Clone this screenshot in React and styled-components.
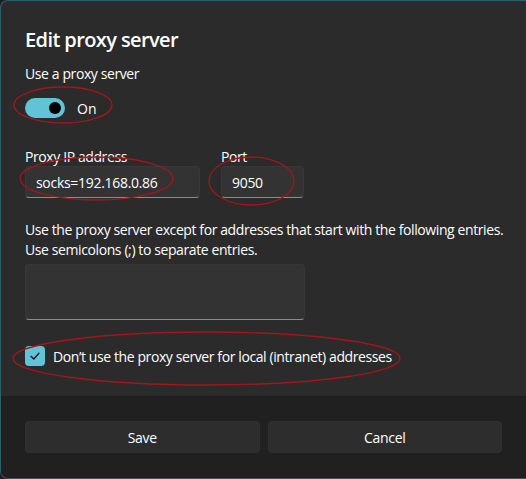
import React from 'react';
import styled, { createGlobalStyle } from 'styled-components';

const Global = createGlobalStyle`
  html, body {
    margin: 0;
    padding: 0;
    background: #1f1f1f;
  }
  * { box-sizing: border-box; }
`

const Dialog = styled.div`
  position: relative;
  width: 526px;
  height: 479px;
  display: flex;
  flex-direction: column;
  background: #2b2b2b;
  border: 1px solid #2d5d70;
  border-right: none;
  border-radius: 8px 0 0 8px;
  overflow: hidden;
  font-family: "Open Sans", "Noto Sans", sans-serif;
  color: #ffffff;
`

const Body = styled.div`
  flex: 1;
  padding: 25px 24px 0 24px;
  display: flex;
  flex-direction: column;
`

const Title = styled.h1`
  margin: 0;
  font-size: 20px;
  line-height: 28px;
  font-weight: 600;
  letter-spacing: -0.6px;
`

const Label = styled.div`
  font-size: 14px;
  line-height: ${({ lh }) => lh || 20}px;
  margin-top: ${({ mt }) => mt || 0}px;
  letter-spacing: -0.4px;
  white-space: nowrap;
`

const ToggleRow = styled.div`
  display: flex;
  align-items: center;
  gap: 12px;
  margin-top: 14px;
  height: 20px;
  font-size: 14px;
`

const Track = styled.div`
  width: 40px;
  height: 20px;
  border-radius: 10px;
  background: #62c3d6;
  display: flex;
  align-items: center;
  justify-content: flex-end;
  padding-right: 4px;
`

const Knob = styled.div`
  width: 12px;
  height: 12px;
  border-radius: 50%;
  background: #000;
`

const Fields = styled.div`
  display: flex;
  gap: 21px;
  margin-top: 29px;
`

const Field = styled.div`
  display: flex;
  flex-direction: column;
  width: ${({ w }) => w}px;
`

const Input = styled.div`
  height: ${({ h }) => h || 32}px;
  width: ${({ w }) => (w ? `${w}px` : '100%')};
  margin-top: ${({ mt }) => mt || 0}px;
  background: #333333;
  border: 1px solid #383838;
  border-bottom: 1px solid #8c8c8c;
  border-radius: 4px;
  padding: 0 10px;
  display: flex;
  align-items: center;
  font-size: 14px;
  letter-spacing: -0.3px;
  color: #fff;
`

const Check = styled.div`
  width: 20px;
  height: 20px;
  border-radius: 4px;
  background: #62c3d6;
  display: flex;
  align-items: center;
  justify-content: center;
`

const CheckRow = styled.div`
  display: flex;
  align-items: center;
  gap: 8px;
  margin-top: 26px;
  font-size: 14px;
  letter-spacing: -0.4px;
  white-space: nowrap;
`

const Footer = styled.div`
  height: 82px;
  background: #202020;
  border-top: 1px solid #1d1d1d;
  padding: 24px 24px 0 24px;
  display: flex;
  gap: 8px;
`

const Button = styled.div`
  flex: 1;
  height: 32px;
  border-radius: 4px;
  background: #2d2d2d;
  border: 1px solid #303030;
  display: flex;
  align-items: center;
  justify-content: center;
  font-size: 14px;
  letter-spacing: -0.3px;
`

const Marks = styled.svg`
  position: absolute;
  left: -1px;
  top: -1px;
  width: 526px;
  height: 479px;
  pointer-events: none;
`

const rings = [
  { x1: 14, y1: 87, x2: 112, y2: 123 },
  { x1: 20, y1: 157, x2: 173, y2: 200 },
  { x1: 209, y1: 157, x2: 294, y2: 205 },
  { x1: 13, y1: 332, x2: 400, y2: 385 },
]

export default function App() {
  return (
    <>
      <Global />
      <Dialog>
        <Body>
          <Title>Edit proxy server</Title>
          <Label mt={10}>Use a proxy server</Label>
          <ToggleRow>
            <Track><Knob /></Track>
            <span>On</span>
          </ToggleRow>
          <Fields>
            <Field w={175}>
              <Label lh={19}>Proxy IP address</Label>
              <Input>socks=192.168.0.86</Input>
            </Field>
            <Field w={83}>
              <Label lh={19}>Port</Label>
              <Input>9050</Input>
            </Field>
          </Fields>
          <Label mt={22}>
            Use the proxy server except for addresses that start with the following entries.
            <br />
            Use semicolons (;) to separate entries.
          </Label>
          <Input h={56} w={280} mt={4} />
          <CheckRow>
            <Check>
              <svg width="12" height="12" viewBox="0 0 12 12">
                <path d="M2 6.3 L4.8 9 L10 3.2" fill="none" stroke="#000" strokeWidth="1.2" strokeLinecap="round" strokeLinejoin="round" />
              </svg>
            </Check>
            <span>Don’t use the proxy server for local (intranet) addresses</span>
          </CheckRow>
        </Body>
        <Footer>
          <Button>Save</Button>
          <Button>Cancel</Button>
        </Footer>
        <Marks viewBox="0 0 526 479">
          {rings.map((r, i) => (
            <ellipse
              key={i}
              cx={(r.x1 + r.x2) / 2}
              cy={(r.y1 + r.y2) / 2}
              rx={(r.x2 - r.x1) / 2}
              ry={(r.y2 - r.y1) / 2}
              fill="none"
              stroke="#a3161b"
              strokeWidth="1.3"
            />
          ))}
        </Marks>
      </Dialog>
    </>
  );
}
